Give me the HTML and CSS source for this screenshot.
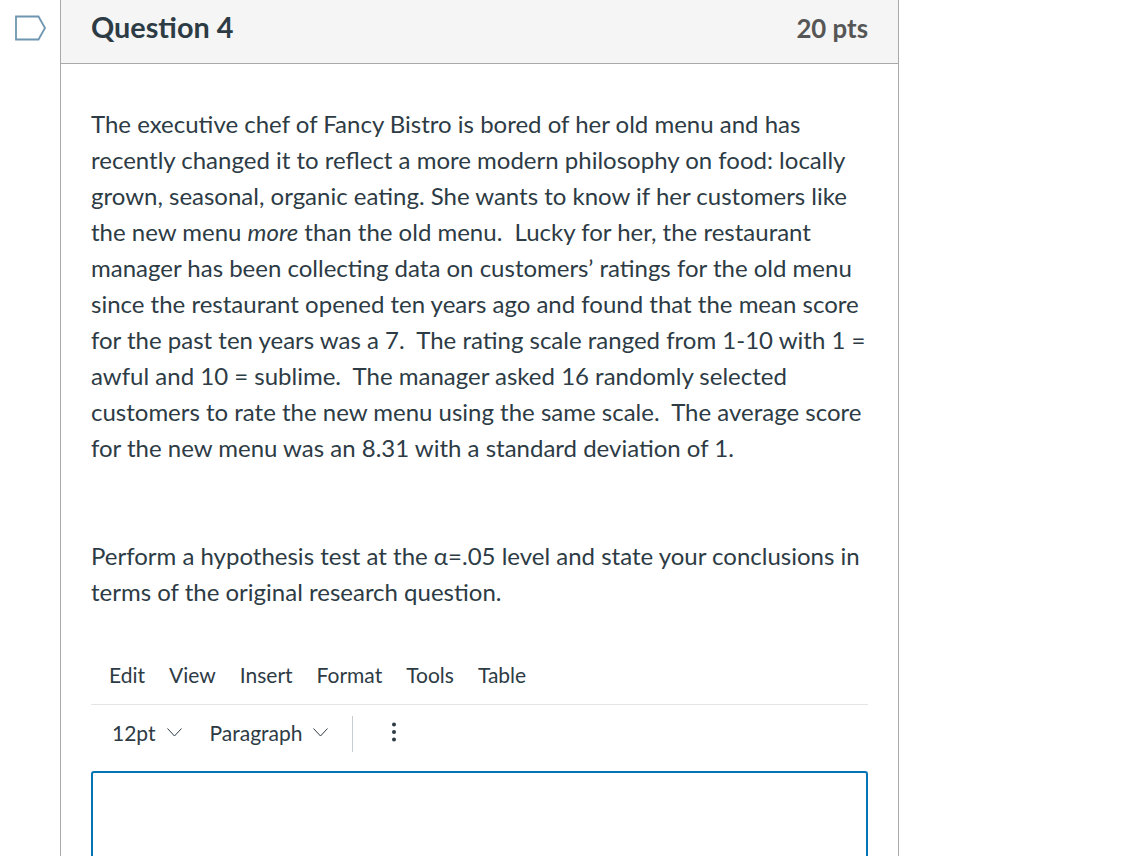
FILE: index.html
```html
<!DOCTYPE html>
<html lang="en">
<head>
<meta charset="utf-8">
<title>Question 4</title>
<link rel="stylesheet" href="styles.css">
</head>
<body>
<div class="page">
  <div class="flag-col">
    <svg class="flag" width="32" height="26" viewBox="0 0 32 26"><path d="M1 1.500H23.500L30 13L23.500 24.500H1Z" fill="#fff" stroke="#6f96b0" stroke-width="1.800"/></svg>
  </div>
  <main class="card">
    <header class="card-head">
      <h2 class="title">Question 4</h2>
      <span class="pts">20 pts</span>
    </header>
    <section class="body">
      <p class="para">The executive chef of Fancy Bistro is bored of her old menu and has recently changed it to reflect a more modern philosophy on food: locally grown, seasonal, organic eating. She wants to know if her customers like the new menu <em>more</em> than the old menu.&nbsp; Lucky for her, the restaurant manager has been collecting data on customers’ ratings for the old menu since the restaurant opened ten years ago and found that the mean score for the past ten years was a 7.&nbsp; The rating scale ranged from 1-10 with 1 = awful and 10 = sublime.&nbsp; The manager asked 16 randomly selected customers to rate the new menu using the same scale.&nbsp; The average score for the new menu was an 8.31 with a standard deviation of 1.</p>
      <p class="para second">Perform a hypothesis test at the α=.05 level and state your conclusions in terms of the original research question.</p>
      <nav class="menubar">
        <span>Edit</span><span>View</span><span>Insert</span><span>Format</span><span>Tools</span><span>Table</span>
      </nav>
      <div class="toolbar">
        <span class="tool tool-size">12pt <svg class="chev" width="15" height="9" viewBox="0 0 15 9"><path d="M.5 .5L7.500 8L14.500 .5" fill="none" stroke="#2d3b45" stroke-width="1"/></svg></span>
        <span class="tool tool-para">Paragraph <svg class="chev" width="15" height="9" viewBox="0 0 15 9"><path d="M.5 .5L7.500 8L14.500 .5" fill="none" stroke="#2d3b45" stroke-width="1"/></svg></span>
        <span class="sep"></span>
        <svg class="dots" width="4" height="20" viewBox="0 0 4 20"><circle cx="2" cy="2.500" r="2"/><circle cx="2" cy="10" r="2"/><circle cx="2" cy="17.500" r="2"/></svg>
      </div>
      <div class="editor"></div>
    </section>
  </main>
</div>
</body>
</html>
```
FILE: styles.css
```css
html, body { margin: 0; padding: 0; height: 856px; overflow: hidden; background: #fff; }
body { font-family: Lato, "Liberation Sans", sans-serif; color: #2d3b45; }
.page { display: flex; align-items: flex-start; height: 856px; }
.flag-col { width: 60px; flex: none; padding: 15px 0 0 15px; box-sizing: border-box; }
.flag { display: block; }
.card { width: 839px; height: 856px; flex: none; border: 1px solid #a9a9a9; border-width: 0 1px; box-sizing: border-box; }
.card-head { display: flex; justify-content: space-between; align-items: center; height: 64px; box-sizing: border-box; padding: 0 30px 10px; background: #f5f5f5; border-bottom: 1px solid #a9a9a9; }
.title { margin: 0; font-size: 28.800px; font-weight: 700; }
.pts { margin-top: 2px; font-size: 25.800px; font-weight: 700; color: #565656; }
.body { padding: 42px 30px 0; }
.para { margin: 0; font-size: 24px; line-height: 36px; }
.second { margin-top: 72px; }
.menubar { display: flex; gap: 24px; padding: 50px 0 0 18px; height: 95px; box-sizing: border-box; font-size: 21px; line-height: 30px; border-bottom: 1px solid #e3e5e7; }
.toolbar { display: flex; align-items: center; height: 56px; padding-bottom: 2px; box-sizing: border-box; font-size: 21px; }
.tool { display: flex; align-items: center; gap: 11px; }
.tool-size { margin-left: 21px; }
.tool-para { margin-left: 28px; }
.sep { width: 1px; height: 36px; margin-top: 4px; background: #c7cdd1; margin-left: 24px; }
.dots { fill: #2d3b45; margin-left: 39px; }
.editor { height: 120px; margin-top: 10px; border: 2px solid #0374b5; border-radius: 3px; box-sizing: border-box; }
```
